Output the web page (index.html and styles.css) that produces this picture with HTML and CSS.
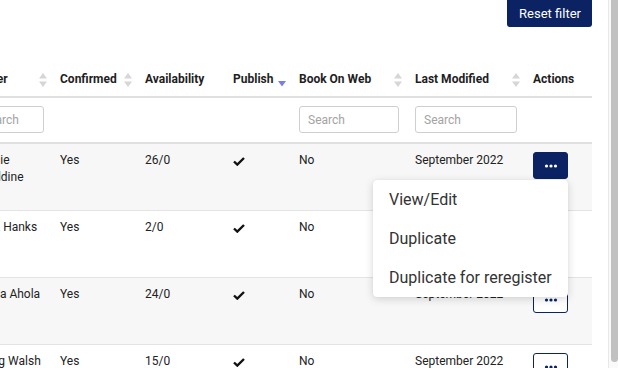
FILE: index.html
```html
<!DOCTYPE html>
<html lang="en">
<head>
    <meta charset="UTF-8">
    <meta name="viewport" content="width=device-width, initial-scale=1.0">
    <title>Courses</title>
    <link rel="stylesheet" href="styles.css">
</head>
<body>
    <div class="page">
        <div class="toolbar">
            <button class="btn-reset">Reset filter</button>
        </div>
        <div class="table-wrap">
            <table class="grid">
                <colgroup>
                    <col style="width: 87px">
                    <col style="width: 85px">
                    <col style="width: 88px">
                    <col style="width: 66px">
                    <col style="width: 116px">
                    <col style="width: 118px">
                    <col style="width: 67px">
                </colgroup>
                <thead>
                    <tr class="head-row">
                        <th>Owner<span class="sort"><svg width="8" height="14" viewBox="0 0 8 14"><path d="M4 0 L8 5.5 L0 5.5 Z M0 8.5 L8 8.5 L4 14 Z"/></svg></span></th>
                        <th>Confirmed<span class="sort"><svg width="8" height="14" viewBox="0 0 8 14"><path d="M4 0 L8 5.5 L0 5.5 Z M0 8.5 L8 8.5 L4 14 Z"/></svg></span></th>
                        <th>Availability</th>
                        <th>Publish<span class="sort active"><svg width="8" height="14" viewBox="0 0 8 14"><path d="M0 8 L8 8 L4 13.5 Z"/></svg></span></th>
                        <th>Book On Web<span class="sort"><svg width="8" height="14" viewBox="0 0 8 14"><path d="M4 0 L8 5.5 L0 5.5 Z M0 8.5 L8 8.5 L4 14 Z"/></svg></span></th>
                        <th>Last Modified<span class="sort"><svg width="8" height="14" viewBox="0 0 8 14"><path d="M4 0 L8 5.5 L0 5.5 Z M0 8.5 L8 8.5 L4 14 Z"/></svg></span></th>
                        <th>Actions</th>
                    </tr>
                    <tr class="filter-row">
                        <td><input type="text" placeholder="Search"></td>
                        <td></td>
                        <td></td>
                        <td></td>
                        <td><input type="text" placeholder="Search"></td>
                        <td><input type="text" placeholder="Search"></td>
                        <td></td>
                    </tr>
                </thead>
                <tbody>
                    <tr>
                        <td>Sophie Geraldine</td>
                        <td>Yes</td>
                        <td>26/0</td>
                        <td><svg class="check" width="12" height="9" viewBox="0 0 12 9"><path d="M1 4.5 L4.3 7.6 L11 1"/></svg></td>
                        <td>No</td>
                        <td>September 2022</td>
                        <td>
                            <div class="action-wrap">
                                <button class="btn-more active"><svg width="14" height="4" viewBox="0 0 14 4"><circle cx="2.5" cy="2" r="1.6"/><circle cx="7" cy="2" r="1.6"/><circle cx="11.5" cy="2" r="1.6"/></svg></button>
                                <div class="menu">
                                    <div class="menu-item">View/Edit</div>
                                    <div class="menu-item">Duplicate</div>
                                    <div class="menu-item">Duplicate for reregister</div>
                                </div>
                            </div>
                        </td>
                    </tr>
                    <tr>
                        <td>Mark Hanks</td>
                        <td>Yes</td>
                        <td>2/0</td>
                        <td><svg class="check" width="12" height="9" viewBox="0 0 12 9"><path d="M1 4.5 L4.3 7.6 L11 1"/></svg></td>
                        <td>No</td>
                        <td>September 2022</td>
                        <td><button class="btn-more"><svg width="14" height="4" viewBox="0 0 14 4"><circle cx="2.5" cy="2" r="1.6"/><circle cx="7" cy="2" r="1.6"/><circle cx="11.5" cy="2" r="1.6"/></svg></button></td>
                    </tr>
                    <tr>
                        <td>Sanna Ahola</td>
                        <td>Yes</td>
                        <td>24/0</td>
                        <td><svg class="check" width="12" height="9" viewBox="0 0 12 9"><path d="M1 4.5 L4.3 7.6 L11 1"/></svg></td>
                        <td>No</td>
                        <td>September 2022</td>
                        <td><button class="btn-more"><svg width="14" height="4" viewBox="0 0 14 4"><circle cx="2.5" cy="2" r="1.6"/><circle cx="7" cy="2" r="1.6"/><circle cx="11.5" cy="2" r="1.6"/></svg></button></td>
                    </tr>
                    <tr>
                        <td>Georg Walsh</td>
                        <td>Yes</td>
                        <td>15/0</td>
                        <td><svg class="check" width="12" height="9" viewBox="0 0 12 9"><path d="M1 4.5 L4.3 7.6 L11 1"/></svg></td>
                        <td>No</td>
                        <td>September 2022</td>
                        <td><button class="btn-more"><svg width="14" height="4" viewBox="0 0 14 4"><circle cx="2.5" cy="2" r="1.6"/><circle cx="7" cy="2" r="1.6"/><circle cx="11.5" cy="2" r="1.6"/></svg></button></td>
                    </tr>
                </tbody>
            </table>
        </div>
    </div>
    <div class="scrollbar"><div class="thumb"></div></div>
</body>
</html>
```

FILE: styles.css
```css
body {
    margin: 0;
    padding: 0;
    display: flex;
    height: 368px;
    overflow: hidden;
    background: #fff;
    color: #222;
    font-family: Roboto, "Liberation Sans", sans-serif;
    font-size: 12px;
}
.page {
    width: 608px;
    padding-right: 16px;
    box-sizing: border-box;
}
.toolbar {
    display: flex;
    justify-content: flex-end;
    height: 27px;
    margin-bottom: 34px;
}
.btn-reset {
    height: 27px;
    padding: 0 11px 0 12px;
    border: none;
    border-radius: 0 0 3px 3px;
    background: #0b2362;
    color: #fff;
    font-family: inherit;
    font-size: 13px;
    cursor: pointer;
}
.table-wrap {
    width: 592px;
    overflow: hidden;
    height: 307px;
}
.grid {
    margin-left: -35px;
    width: 627px;
    table-layout: fixed;
    border-collapse: separate;
    border-spacing: 0;
}
.head-row th {
    position: relative;
    height: 35px;
    padding: 0 8px;
    text-align: left;
    font-weight: bold;
    font-size: 12px;
    color: #1e1e1e;
    white-space: nowrap;
    border-bottom: 2px solid #e0e0e0;
}
.sort {
    position: absolute;
    right: 5px;
    top: 12px;
    width: 8px;
    height: 14px;
}
.sort svg {
    display: block;
    fill: #d6d6d6;
}
.sort.active svg {
    fill: #7b7fe3;
}
.filter-row td {
    padding: 8px 8px 9px;
    border-bottom: 2px solid #e0e0e0;
}
.filter-row input {
    display: block;
    width: 100%;
    height: 27px;
    box-sizing: border-box;
    padding: 0 8px;
    border: 1px solid #cfcfcf;
    border-radius: 3px;
    font-family: inherit;
    font-size: 12px;
    color: #222;
}
.filter-row input::placeholder {
    color: #a3a3a3;
}
tbody td {
    height: 67px;
    box-sizing: border-box;
    padding: 8px 8px 0;
    vertical-align: top;
    line-height: 17px;
    border-bottom: 1px solid #e3e3e3;
}
tbody tr:nth-child(odd) td {
    background: #f7f7f7;
}
.check {
    display: block;
    margin-top: 5px;
    fill: none;
    stroke: #111;
    stroke-width: 2.4;
}
.action-wrap {
    position: relative;
    display: inline-block;
}
.btn-more {
    display: flex;
    align-items: center;
    justify-content: center;
    width: 35px;
    height: 27px;
    padding: 0;
    border: 1px solid #0b2362;
    border-radius: 3px;
    background: #fff;
    cursor: pointer;
}
.btn-more svg {
    fill: #0b2362;
}
.btn-more.active {
    background: #0b2362;
}
.btn-more.active svg {
    fill: #fff;
}
.menu {
    position: absolute;
    top: 28px;
    right: 0;
    width: 195px;
    z-index: 5;
    background: #fff;
    border-radius: 4px;
    box-shadow: 0 2px 8px rgba(0, 0, 0, 0.16), 0 0 1px rgba(0, 0, 0, 0.1);
}
.menu-item {
    height: 39px;
    line-height: 39px;
    padding: 0 16px;
    font-size: 16px;
    color: #333;
    white-space: nowrap;
}
.scrollbar {
    width: 10px;
    border-left: 1px solid #e8e8e8;
    background: #fafafa;
}
.thumb {
    margin-left: 2px;
    height: 362px;
    background: #c1c1c1;
    border-radius: 0 0 4px 4px;
}
```
